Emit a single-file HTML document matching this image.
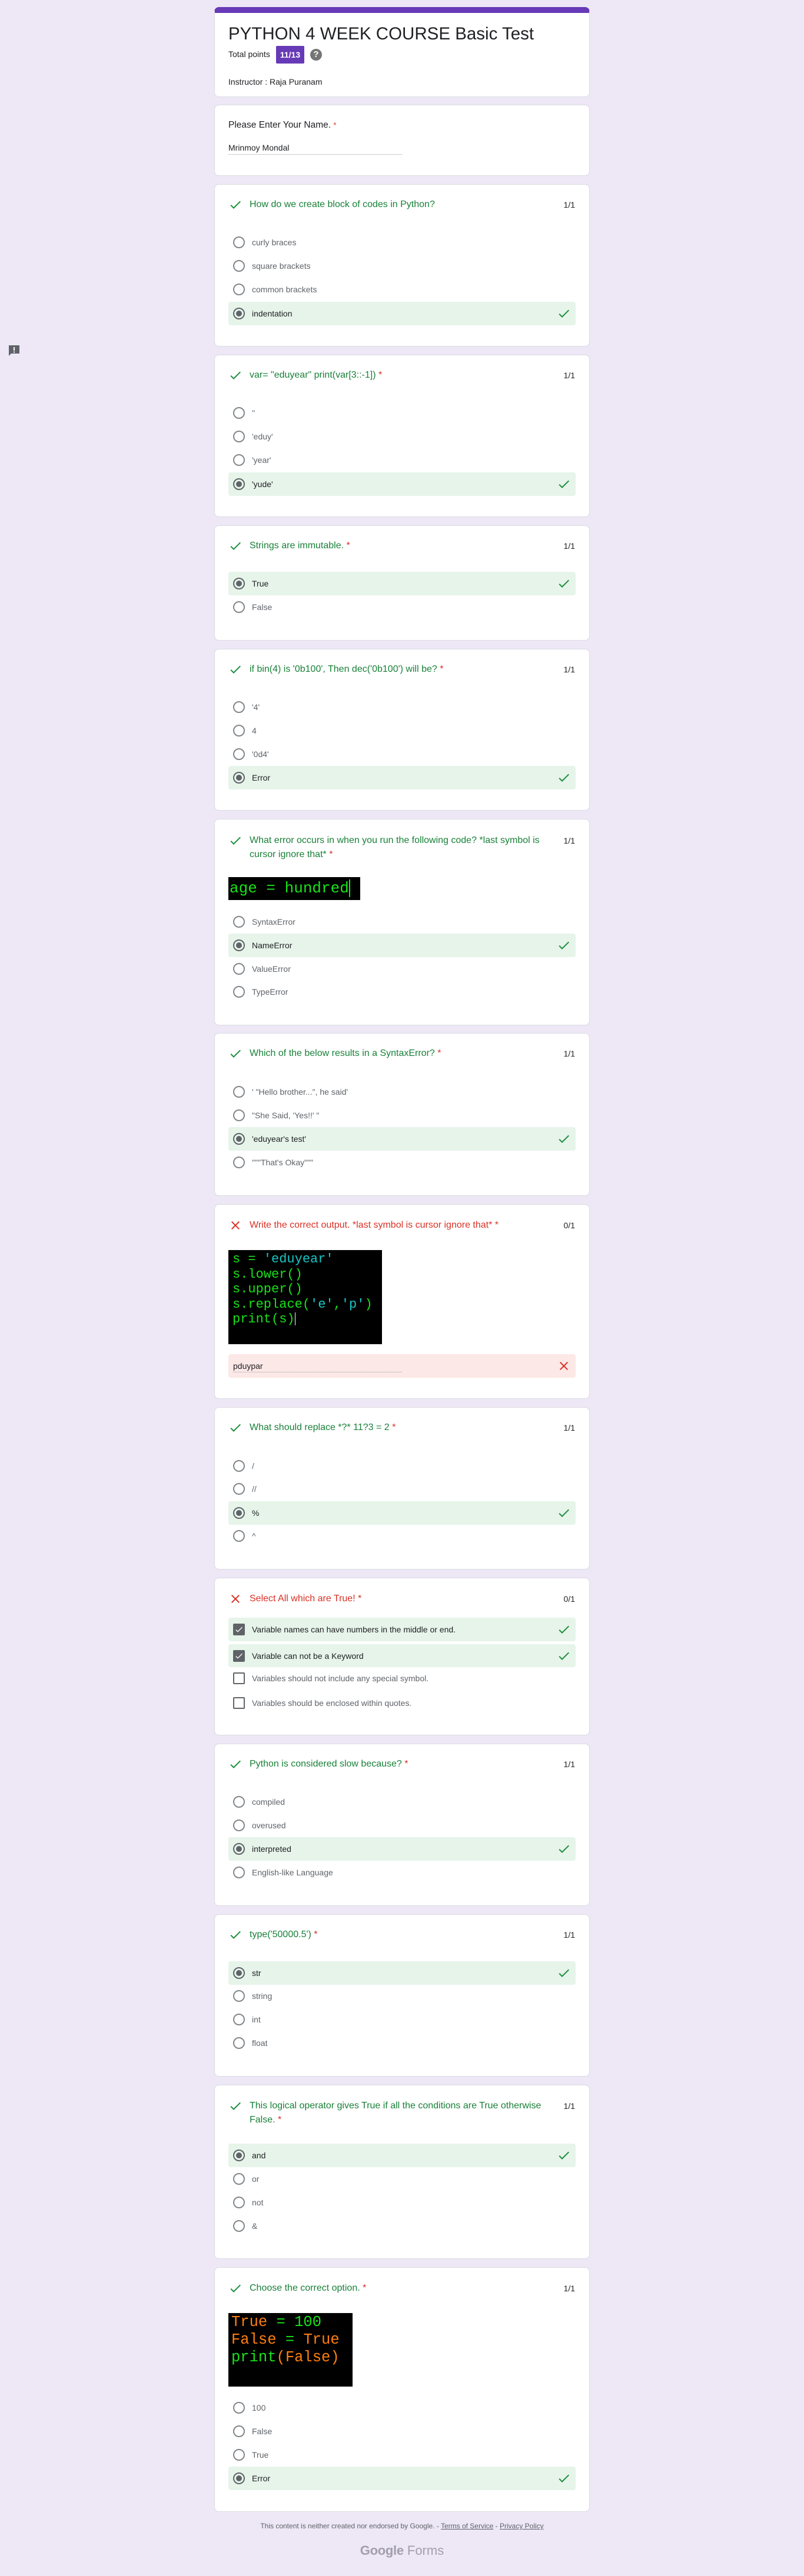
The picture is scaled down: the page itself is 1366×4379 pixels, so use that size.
<!DOCTYPE html>
<html><head><meta charset="utf-8">
<style>
*{box-sizing:border-box;margin:0;padding:0}
html,body{width:1366px;height:4379px;background:#ede7f6;font-family:"Liberation Sans",Arial,sans-serif;color:#202124;position:relative;overflow:hidden}
.card{position:absolute;left:364px;width:638px;background:#fff;border:1px solid #dadce0;border-radius:8px}
.q{position:absolute;left:59px;top:22px;font-size:16px;line-height:24px;color:#188038;white-space:nowrap}
.q.r{color:#d93025}
.ast{color:#d93025}
.pts{position:absolute;right:24px;top:22px;font-size:14px;line-height:24px;color:#202124}
.hi{position:absolute;left:23px;top:22px;width:24px;height:24px}
.opt{position:absolute;left:23px;width:590px;height:40px;border-radius:4px}
.opt.sel{background:#e6f4ea}
.rad{position:absolute;left:8px;top:10px;width:20px;height:20px;border:2px solid #80868b;border-radius:50%}
.sel .rad{border-color:#5f6368}
.sel .rad::after{content:"";position:absolute;left:3px;top:3px;width:10px;height:10px;border-radius:50%;background:#5f6368}
.cb{position:absolute;left:8px;top:10px;width:20px;height:20px;border:2px solid #5f6368;border-radius:2px}
.cb.on{background:#5f6368}
.cb.on svg{position:absolute;left:0;top:0}
.ot{position:absolute;left:40px;top:10px;font-size:14px;line-height:20px;color:#5f6368;white-space:nowrap}
.sel .ot{color:#202124}
.ok{position:absolute;left:558px;top:8px;width:24px;height:24px}
.code{position:absolute;left:23px;background:#000;font-family:"Liberation Mono","DejaVu Sans Mono",monospace;white-space:pre;overflow:hidden}
.g{color:#19e319}.c{color:#19c7c7}.o{color:#ff7f0f}
</style></head><body>

<svg width="0" height="0" style="position:absolute"><defs>
<symbol id="chk" viewBox="0 0 24 24"><path d="M9 16.17L4.83 12l-1.42 1.41L9 19 21 7l-1.41-1.41z" fill="#1e8e3e"/></symbol>
<symbol id="xx" viewBox="0 0 24 24"><path d="M19 6.41L17.59 5 12 10.59 6.41 5 5 6.41 10.59 12 5 17.59 6.41 19 12 13.41 17.59 19 19 17.59 13.41 12z" fill="#d93025"/></symbol>
</defs></svg>

<!-- feedback icon -->
<svg style="position:absolute;left:13px;top:585px" width="22" height="22" viewBox="0 0 22 22"><path d="M2 2h18v14H6l-4 4z" fill="#5f6368"/><rect x="10" y="5" width="2" height="6" fill="#fff"/><rect x="10" y="12.5" width="2" height="2" fill="#fff"/></svg>

<!-- title card -->
<div class="card" style="top:12px;height:153px;border-top:10px solid #673ab7;border-color:#673ab7 #dadce0 #dadce0 #dadce0">
  <div style="position:absolute;left:23px;top:18px;font-size:29.5px;line-height:36px;white-space:nowrap">PYTHON 4 WEEK COURSE Basic Test</div>
  <div style="position:absolute;left:23px;top:60px;font-size:14px;line-height:20px">Total points</div>
  <div style="position:absolute;left:104px;top:56px;width:48px;height:30px;background:#673ab7;border-radius:2px;color:#fff;font-size:14px;font-weight:bold;line-height:30px;text-align:center">11/13</div>
  <div style="position:absolute;left:162px;top:61px;width:20px;height:20px;border-radius:50%;background:#757575;color:#fff;font-size:15px;font-weight:bold;line-height:20px;text-align:center">?</div>
  <div style="position:absolute;left:23px;top:107px;font-size:14px;line-height:20px">Instructor : Raja Puranam</div>
</div>

<!-- name card -->
<div class="card" style="top:178px;height:121px">
  <div style="position:absolute;left:23px;top:22px;font-size:15.5px;line-height:24px">Please Enter Your Name. <span class="ast" style="font-size:13px">*</span></div>
  <div style="position:absolute;left:23px;top:62px;font-size:14px;line-height:20px">Mrinmoy Mondal</div>
  <div style="position:absolute;left:23px;top:83px;width:295px;border-top:1px dotted #9aa0a6"></div>
</div>

<!-- Q1 -->
<div class="card" style="top:313px;height:276px">
  <svg class="hi"><use href="#chk"/></svg>
  <div class="q">How do we create block of codes in Python?</div>
  <div class="pts">1/1</div>
  <div class="opt" style="top:78px"><div class="rad"></div><div class="ot">curly braces</div></div>
  <div class="opt" style="top:118px"><div class="rad"></div><div class="ot">square brackets</div></div>
  <div class="opt" style="top:158px"><div class="rad"></div><div class="ot">common brackets</div></div>
  <div class="opt sel" style="top:199px"><div class="rad"></div><div class="ot">indentation</div><svg class="ok"><use href="#chk"/></svg></div>
</div>

<!-- Q2 -->
<div class="card" style="top:603px;height:276px">
  <svg class="hi"><use href="#chk"/></svg>
  <div class="q">var= "eduyear" print(var[3::-1]) <span class="ast">*</span></div>
  <div class="pts">1/1</div>
  <div class="opt" style="top:78px"><div class="rad"></div><div class="ot">''</div></div>
  <div class="opt" style="top:118px"><div class="rad"></div><div class="ot">'eduy'</div></div>
  <div class="opt" style="top:158px"><div class="rad"></div><div class="ot">'year'</div></div>
  <div class="opt sel" style="top:199px"><div class="rad"></div><div class="ot">'yude'</div><svg class="ok"><use href="#chk"/></svg></div>
</div>

<!-- Q3 -->
<div class="card" style="top:893px;height:196px">
  <svg class="hi"><use href="#chk"/></svg>
  <div class="q">Strings are immutable. <span class="ast">*</span></div>
  <div class="pts">1/1</div>
  <div class="opt sel" style="top:78px"><div class="rad"></div><div class="ot">True</div><svg class="ok"><use href="#chk"/></svg></div>
  <div class="opt" style="top:118px"><div class="rad"></div><div class="ot">False</div></div>
</div>

<!-- Q4 -->
<div class="card" style="top:1103px;height:275px">
  <svg class="hi"><use href="#chk"/></svg>
  <div class="q">if bin(4) is '0b100', Then dec('0b100') will be? <span class="ast">*</span></div>
  <div class="pts">1/1</div>
  <div class="opt" style="top:78px"><div class="rad"></div><div class="ot">'4'</div></div>
  <div class="opt" style="top:118px"><div class="rad"></div><div class="ot">4</div></div>
  <div class="opt" style="top:158px"><div class="rad"></div><div class="ot">'0d4'</div></div>
  <div class="opt sel" style="top:198px"><div class="rad"></div><div class="ot">Error</div><svg class="ok"><use href="#chk"/></svg></div>
</div>

<!-- Q5 -->
<div class="card" style="top:1392px;height:351px">
  <svg class="hi" style="top:24px"><use href="#chk"/></svg>
  <div class="q" style="top:24px">What error occurs in when you run the following code? *last symbol is<br>cursor ignore that* <span class="ast">*</span></div>
  <div class="pts" style="top:24px">1/1</div>
  <div class="code" style="top:98px;width:224px;height:39px;font-size:26px;line-height:39px;padding-left:2px"><span class="g">age = hundred</span><span style="display:inline-block;width:2px;height:30px;background:#19e319;vertical-align:middle"></span></div>
  <div class="opt" style="top:154px"><div class="rad"></div><div class="ot">SyntaxError</div></div>
  <div class="opt sel" style="top:194px"><div class="rad"></div><div class="ot">NameError</div><svg class="ok"><use href="#chk"/></svg></div>
  <div class="opt" style="top:234px"><div class="rad"></div><div class="ot">ValueError</div></div>
  <div class="opt" style="top:273px"><div class="rad"></div><div class="ot">TypeError</div></div>
</div>

<!-- Q6 -->
<div class="card" style="top:1756px;height:277px">
  <svg class="hi"><use href="#chk"/></svg>
  <div class="q">Which of the below results in a SyntaxError? <span class="ast">*</span></div>
  <div class="pts">1/1</div>
  <div class="opt" style="top:79px"><div class="rad"></div><div class="ot">' "Hello brother...", he said'</div></div>
  <div class="opt" style="top:119px"><div class="rad"></div><div class="ot">"She Said, 'Yes!!' "</div></div>
  <div class="opt sel" style="top:159px"><div class="rad"></div><div class="ot">'eduyear's test'</div><svg class="ok"><use href="#chk"/></svg></div>
  <div class="opt" style="top:199px"><div class="rad"></div><div class="ot">"""That's Okay"""</div></div>
</div>

<!-- Q7 -->
<div class="card" style="top:2047px;height:331px">
  <svg class="hi" style="top:23px"><use href="#xx"/></svg>
  <div class="q r" style="top:23px">Write the correct output. *last symbol is cursor ignore that* <span class="ast">*</span></div>
  <div class="pts" style="top:23px">0/1</div>
  <div class="code" style="top:77px;width:261px;height:160px;font-size:22px;line-height:25.5px;padding:3px 0 0 7px"><span class="g">s = </span><span class="c">'eduyear'</span>
<span class="g">s.lower()</span>
<span class="g">s.upper()</span>
<span class="g">s.replace(</span><span class="c">'e'</span><span class="g">,</span><span class="c">'p'</span><span class="g">)</span>
<span class="g">print(s)</span><span style="display:inline-block;width:1px;height:22px;background:#fff;vertical-align:middle"></span></div>
  <div style="position:absolute;left:23px;top:254px;width:590px;height:40px;background:#fce8e6;border-radius:4px">
    <div style="position:absolute;left:8px;top:10px;font-size:14px;line-height:20px">pduypar</div>
    <div style="position:absolute;left:8px;top:30px;width:287px;border-top:1px dotted #9aa0a6"></div>
    <svg class="ok"><use href="#xx"/></svg>
  </div>
</div>

<!-- Q8 -->
<div class="card" style="top:2392px;height:276px">
  <svg class="hi"><use href="#chk"/></svg>
  <div class="q">What should replace *?* 11?3 = 2 <span class="ast">*</span></div>
  <div class="pts">1/1</div>
  <div class="opt" style="top:79px"><div class="rad"></div><div class="ot">/</div></div>
  <div class="opt" style="top:118px"><div class="rad"></div><div class="ot">//</div></div>
  <div class="opt sel" style="top:159px"><div class="rad"></div><div class="ot">%</div><svg class="ok"><use href="#chk"/></svg></div>
  <div class="opt" style="top:198px"><div class="rad"></div><div class="ot">^</div></div>
</div>

<!-- Q9 -->
<div class="card" style="top:2682px;height:268px">
  <svg class="hi" style="top:23px"><use href="#xx"/></svg>
  <div class="q r" style="top:23px">Select All which are True! <span class="ast">*</span></div>
  <div class="pts" style="top:23px">0/1</div>
  <div class="opt sel" style="top:67px"><div class="cb on"><svg width="16" height="16" viewBox="0 0 24 24"><path d="M9 16.17L4.83 12l-1.42 1.41L9 19 21 7l-1.41-1.41z" fill="#fff"/></svg></div><div class="ot">Variable names can have numbers in the middle or end.</div><svg class="ok"><use href="#chk"/></svg></div>
  <div class="opt sel" style="top:112px;height:39px"><div class="cb on"><svg width="16" height="16" viewBox="0 0 24 24"><path d="M9 16.17L4.83 12l-1.42 1.41L9 19 21 7l-1.41-1.41z" fill="#fff"/></svg></div><div class="ot">Variable can not be a Keyword</div><svg class="ok"><use href="#chk"/></svg></div>
  <div class="opt" style="top:150px"><div class="cb"></div><div class="ot">Variables should not include any special symbol.</div></div>
  <div class="opt" style="top:192px"><div class="cb"></div><div class="ot">Variables should be enclosed within quotes.</div></div>
</div>

<!-- Q10 -->
<div class="card" style="top:2964px;height:276px">
  <svg class="hi"><use href="#chk"/></svg>
  <div class="q">Python is considered slow because? <span class="ast">*</span></div>
  <div class="pts">1/1</div>
  <div class="opt" style="top:78px"><div class="rad"></div><div class="ot">compiled</div></div>
  <div class="opt" style="top:118px"><div class="rad"></div><div class="ot">overused</div></div>
  <div class="opt sel" style="top:158px"><div class="rad"></div><div class="ot">interpreted</div><svg class="ok"><use href="#chk"/></svg></div>
  <div class="opt" style="top:198px"><div class="rad"></div><div class="ot">English-like Language</div></div>
</div>

<!-- Q11 -->
<div class="card" style="top:3254px;height:276px">
  <svg class="hi"><use href="#chk"/></svg>
  <div class="q">type('50000.5') <span class="ast">*</span></div>
  <div class="pts">1/1</div>
  <div class="opt sel" style="top:79px"><div class="rad"></div><div class="ot">str</div><svg class="ok"><use href="#chk"/></svg></div>
  <div class="opt" style="top:118px"><div class="rad"></div><div class="ot">string</div></div>
  <div class="opt" style="top:158px"><div class="rad"></div><div class="ot">int</div></div>
  <div class="opt" style="top:198px"><div class="rad"></div><div class="ot">float</div></div>
</div>

<!-- Q12 -->
<div class="card" style="top:3544px;height:296px">
  <svg class="hi" style="top:23px"><use href="#chk"/></svg>
  <div class="q" style="top:23px">This logical operator gives True if all the conditions are True otherwise<br>False. <span class="ast">*</span></div>
  <div class="pts" style="top:23px">1/1</div>
  <div class="opt sel" style="top:99px"><div class="rad"></div><div class="ot">and</div><svg class="ok"><use href="#chk"/></svg></div>
  <div class="opt" style="top:139px"><div class="rad"></div><div class="ot">or</div></div>
  <div class="opt" style="top:179px"><div class="rad"></div><div class="ot">not</div></div>
  <div class="opt" style="top:219px"><div class="rad"></div><div class="ot">&amp;</div></div>
</div>

<!-- Q13 -->
<div class="card" style="top:3854px;height:416px">
  <svg class="hi" style="top:23px"><use href="#chk"/></svg>
  <div class="q" style="top:23px">Choose the correct option. <span class="ast">*</span></div>
  <div class="pts" style="top:23px">1/1</div>
  <div class="code" style="top:77px;width:211px;height:125px;font-size:25.5px;line-height:30px;padding:1px 0 0 5px"><span class="o">True</span><span class="g"> = 100</span>
<span class="o">False</span><span class="g"> = </span><span class="o">True</span>
<span class="g">print</span><span class="o">(False)</span></div>
  <div class="opt" style="top:218px"><div class="rad"></div><div class="ot">100</div></div>
  <div class="opt" style="top:258px"><div class="rad"></div><div class="ot">False</div></div>
  <div class="opt" style="top:298px"><div class="rad"></div><div class="ot">True</div></div>
  <div class="opt sel" style="top:338px"><div class="rad"></div><div class="ot">Error</div><svg class="ok"><use href="#chk"/></svg></div>
</div>

<!-- footer -->
<div style="position:absolute;left:0;width:1366px;top:4286px;text-align:center;font-size:12px;line-height:16px;color:#5f6368">This content is neither created nor endorsed by Google. - <u>Terms of Service</u> - <u>Privacy Policy</u></div>
<div style="position:absolute;left:0;width:1366px;top:4322px;text-align:center;font-size:22px;line-height:28px;color:#a39fab;white-space:nowrap"><span style="font-weight:bold;letter-spacing:-0.3px">Google</span> Forms</div>

</body></html>
